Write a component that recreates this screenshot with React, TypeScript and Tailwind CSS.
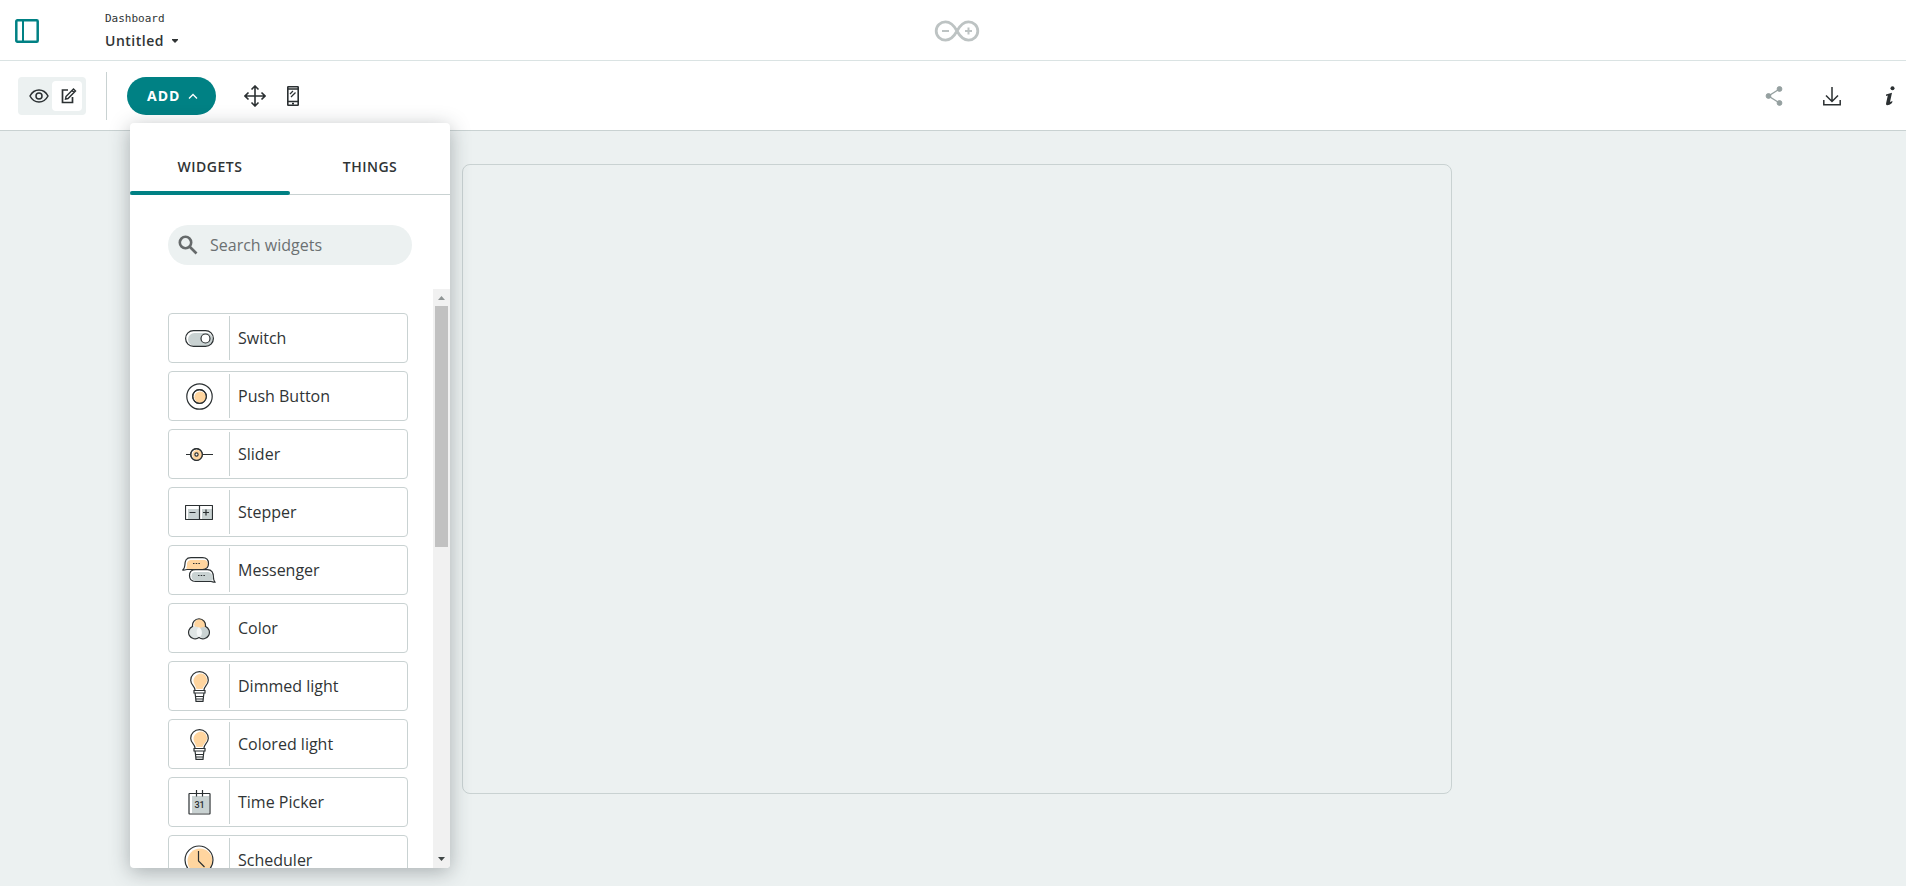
import React, { useState } from 'react';

type IconProps = { children: React.ReactNode; w: number; h: number };

const Icon: React.FC<IconProps> = ({ children, w, h }) => (
  <svg width={w} height={h} viewBox={`0 0 ${w} ${h}`} fill="none" stroke="#2b3032" strokeWidth="1.2" aria-hidden="true">
    {children}
  </svg>
);

const SwitchIcon = () => (
  <Icon w={29} h={17}>
    <rect x="3" y="3" width="25" height="13" rx="6.5" fill="#c9d2d2" stroke="none" />
    <rect x=".6" y=".6" width="27.8" height="15.8" rx="7.9" />
    <circle cx="20.5" cy="8.5" r="4.5" fill="#fff" />
  </Icon>
);

const PushButtonIcon = () => (
  <Icon w={27} h={27}>
    <circle cx="13.5" cy="13.5" r="12.7" />
    <circle cx="13.5" cy="13.5" r="6.8" fill="#fff" />
    <circle cx="14.2" cy="14.2" r="5.8" fill="#ffd59f" stroke="none" />
    <circle cx="13.5" cy="13.5" r="6.8" />
  </Icon>
);

const SliderIcon = () => (
  <Icon w={27} h={13}>
    <path d="M0 6.5h5M16 6.5h11" />
    <circle cx="10.5" cy="6.5" r="5.8" fill="#fff" />
    <circle cx="11.2" cy="7" r="4.9" fill="#ffd59f" stroke="none" />
    <circle cx="10.5" cy="6.5" r="5.8" />
    <circle cx="10.5" cy="6.5" r="1.6" fill="#fff" />
  </Icon>
);

const StepperIcon = () => (
  <Icon w={28} h={15}>
    <path d="M3 4h11v10H3zM17 4h10v10H17z" fill="#c9d2d2" stroke="none" />
    <rect x=".5" y=".5" width="27" height="14" rx=".5" />
    <path d="M14.500 .5v14M4.500 7.500h6M18 7.500h6M21 4.500v6" />
  </Icon>
);

const MessengerIcon = () => (
  <Icon w={34} h={26}>
    <path d="M9 3h14q3 1 3 5-1 4-5 4H6c-2 0-2-1-1-3V6q1-3 4-3z" fill="#ffd59f" stroke="none" />
    <path d="M.8 13c1.500-1.500 1.900-2.500 2-4.500C3 3.500 4 .7 9 .7h11.500q6 0 6 5.900t-6 5.900H5c-1 0-2.500 1-4.200.5z" />
    <path d="M33 25.200c-1.300-1.500-1.500-2.500-1.500-4.500 0-5.500-1.500-8-6-8H13.500q-6 0-6 5.900t6 5.900H29c1.500 0 2.500 1.100 4 .7z" fill="#fff" />
    <path d="M12 15h14.500q4 1 4.500 6 0 3-3 3H13q-3.500-1-3.500-5 0-3 2.500-4z" fill="#c9d2d2" stroke="none" />
    <path d="M11 6.500h1.500m1.200 0h1.500m1.200 0h1.500M16 18.500h1.500m1.200 0h1.500m1.200 0h1.500" />
  </Icon>
);

const ColorIcon = () => (
  <Icon w={24} h={24}>
    <circle cx="13" cy="8.500" r="5.800" fill="#ffd59f" stroke="none" />
    <circle cx="8.300" cy="16.500" r="6" fill="#dfe5e5" stroke="none" />
    <circle cx="16.500" cy="16.500" r="5.500" fill="#c9d2d2" stroke="none" />
    <path d="M12 11q4 3 2.500 8-1.500 2.500-2.500 2.500T9.800 18Q9 13 12 11z" fill="#f4f7f7" stroke="none" />
    <path d="M5.600 10.400a6.500 6.500 0 1 1 12.800 0a6.500 6.500 0 1 1-6.400 11.200a6.500 6.500 0 1 1-6.400-11.200z" />
  </Icon>
);

const BulbIcon = () => (
  <Icon w={19} h={31}>
    <path d="M11 2.500c4 .5 6 3.500 6 7 0 3.500-4 5.500-4.500 8.500H6.500C6 15 3.500 13 3.500 10c0-4 3.500-7 7.500-7.500z" fill="#ffd59f" stroke="none" />
    <path d="M5 19c0-4-4.300-5-4.300-9.800a8.800 8.600 0 0 1 17.600 0C18.300 14 14 15 14 19" />
    <path d="M4 19.500h11v2.500H4zM5 22l.5 3.500h8L14 22M5.500 25.500l.5 4.900h7l.5-4.900M6 28h7" />
  </Icon>
);

const TimePickerIcon = () => (
  <Icon w={23} h={25}>
    <path d="M4 6h17v17H4z" fill="#c9d2d2" stroke="none" />
    <rect x="1" y="3.500" width="21" height="20.500" rx=".5" />
    <path d="M8.500 0v6.500M14.500 0v6.500" />
    <text x="11.500" y="18" textAnchor="middle" fill="#2b3032" stroke="none" className="font-['Roboto'] text-[9px] font-medium">31</text>
  </Icon>
);

const SchedulerIcon = () => (
  <Icon w={30} h={30}>
    <circle cx="16" cy="16" r="12.500" fill="#ffd59f" stroke="none" />
    <circle cx="15" cy="15" r="14" />
    <path d="M14.500 6v10l6 6" />
  </Icon>
);

const WIDGETS = [
  { name: 'Switch', icon: <SwitchIcon /> },
  { name: 'Push Button', icon: <PushButtonIcon /> },
  { name: 'Slider', icon: <SliderIcon /> },
  { name: 'Stepper', icon: <StepperIcon /> },
  { name: 'Messenger', icon: <MessengerIcon /> },
  { name: 'Color', icon: <ColorIcon /> },
  { name: 'Dimmed light', icon: <BulbIcon /> },
  { name: 'Colored light', icon: <BulbIcon /> },
  { name: 'Time Picker', icon: <TimePickerIcon /> },
  { name: 'Scheduler', icon: <SchedulerIcon /> },
];

const Header = () => (
  <header className="grid h-[61px] shrink-0 grid-cols-[1fr_auto_1fr] items-center border-b border-[#dae3e3] bg-white pt-px pl-2">
    <div className="flex items-center gap-[66px] pl-[7px]">
      <button aria-label="Toggle sidebar">
        <svg width="24" height="24" viewBox="0 0 24 24" fill="none" stroke="#008184" strokeWidth="2.5">
          <rect x="1.300" y="1.300" width="21.400" height="21.400" rx="1" />
          <path d="M8 1v22" strokeWidth="2" />
        </svg>
      </button>
      <div className="flex flex-col">
        <span className="font-['DejaVu_Sans_Mono',monospace] text-[11px] leading-4">Dashboard</span>
        <button className="mt-1 flex items-center gap-2 text-sm leading-5 font-semibold tracking-[0.5px]">
          Untitled
          <svg width="6" height="4" viewBox="0 0 6 4" fill="currentColor" aria-hidden="true">
            <path d="M0 0h6v1L3 4 0 1z" />
          </svg>
        </button>
      </div>
    </div>
    <svg width="46" height="22" viewBox="0 0 46 22" fill="none" stroke="#bdc3c3" strokeWidth="2.800" role="img" aria-label="Arduino">
      <path d="M23 11C20 5.500 16.500 1.900 11.500 1.900a9.300 9.100 0 0 0 0 18.200C16.500 20.100 20 16.500 23 11s6.500-9.100 11.500-9.100a9.300 9.100 0 0 1 0 18.200C29.500 20.100 26 16.500 23 11z" />
      <path d="M8 11h7M31 11h7M34.500 7.500v7" strokeWidth="2" />
    </svg>
  </header>
);

const Toolbar = () => (
  <div className="flex h-[70px] shrink-0 items-center justify-between border-b border-[#c9d2d2] bg-white pr-[10px] pl-[18px]">
    <div className="flex items-center">
      <div className="flex h-[38px] items-center rounded-sm bg-[#ecf1f1] px-1">
        <button aria-label="Preview" className="flex size-[30px] items-center justify-center pl-1">
          <svg width="20" height="14" viewBox="0 0 20 14" fill="none" stroke="#2b3032" strokeWidth="1.500">
            <path d="M1 7c2-3.800 5.300-6 9-6s7 2.200 9 6c-2 3.800-5.300 6-9 6S3 10.800 1 7z" />
            <circle cx="10" cy="7" r="3" />
          </svg>
        </button>
        <button aria-label="Edit" aria-pressed="true" className="flex size-[30px] items-center justify-center rounded-sm bg-white pl-1">
          <svg width="16" height="16" viewBox="0 0 16 16" fill="none" stroke="#2b3032" strokeWidth="1.700">
            <path d="M7 2H1.500v12.500h10V9" />
            <path d="M5 8.500 12.500 1l2 2L7 10.500l-2.500.5zM11 2.500l2 2" strokeWidth="1.400" />
          </svg>
        </button>
      </div>
      <div className="ml-5 h-12 w-px bg-[#c9d2d2]" />
      <button className="ml-5 flex h-[38px] items-center gap-2 rounded-full bg-[#008184] pr-[18px] pl-5 text-sm font-bold tracking-[1px] text-white">
        ADD
        <svg width="10" height="6" viewBox="0 0 10 6" fill="none" stroke="currentColor" strokeWidth="1.300" aria-hidden="true">
          <path d="M1 5.500 5 1.500l4 4" />
        </svg>
      </button>
      <button aria-label="Move" className="ml-7">
        <svg width="22" height="22" viewBox="0 0 22 22" fill="none" stroke="#2b3032" strokeWidth="1.600">
          <path d="M11 1.500v19M1.500 11h19M7.500 4.500 11 1l3.500 3.500M7.500 17.500 11 21l3.500-3.500M4.500 7.500 1 11l3.500 3.500M17.500 7.500 21 11l-3.500 3.500" />
        </svg>
      </button>
      <button aria-label="Mobile layout" className="ml-[21px]">
        <svg width="12" height="20" viewBox="0 0 12 20" fill="none" stroke="#2b3032" strokeWidth="1.600">
          <rect x=".8" y=".8" width="10.400" height="18.400" rx=".5" />
          <path d="M1 3h10M1 15.500h10M3 8l3-3M4 11l4.500-4.500" strokeWidth="1.300" />
          <path d="M5 17.600h2" strokeWidth="1.600" />
        </svg>
      </button>
    </div>
    <div className="flex items-center">
      <button aria-label="Share">
        <svg width="18" height="20" viewBox="0 0 18 20" fill="#95a0a0" stroke="#95a0a0">
          <path d="M14.500 3 3.500 10l11 7" fill="none" strokeWidth="1.400" />
          <circle cx="14.500" cy="3" r="2.400" />
          <circle cx="3.500" cy="10" r="2.400" />
          <circle cx="14.500" cy="17" r="2.400" />
        </svg>
      </button>
      <button aria-label="Download" className="ml-10">
        <svg width="18" height="20" viewBox="0 0 18 20" fill="none" stroke="#2b3032" strokeWidth="1.500">
          <path d="M9 1v14M3 9.500l6 6 6-6M.8 14v4.700h16.400V14" />
        </svg>
      </button>
      <button aria-label="Information" className="ml-[43px]">
        <svg width="12" height="20" viewBox="0 0 12 20" fill="#2b3032">
          <circle cx="8.500" cy="2.300" r="2" />
          <path d="M2 8.500 8 6.800 6 16l2.500-1-.5 2c-2 1.500-3.500 2.300-5 2.200-1.300-.3-1-1.700-.7-3L3.800 9.500 2 10z" />
        </svg>
      </button>
    </div>
  </div>
);

const AddPanel = () => {
  const [tab, setTab] = useState('WIDGETS');

  return (
    <aside className="absolute top-[123px] bottom-[18px] left-[130px] z-10 flex w-80 flex-col overflow-hidden rounded-sm bg-white shadow-[0_4px_20px_rgba(44,53,58,0.35)]">
      <div role="tablist" className="flex h-[72px] shrink-0 border-b border-[#c9d2d2]">
        {['WIDGETS', 'THINGS'].map((name) => (
          <button
            key={name}
            role="tab"
            aria-selected={tab === name}
            onClick={() => setTab(name)}
            className="relative flex flex-1 items-center justify-center pt-4 text-sm font-semibold tracking-[0.5px]"
          >
            {name}
            {tab === name && <span className="absolute inset-x-0 -bottom-px h-1 rounded-sm bg-[#008184]" />}
          </button>
        ))}
      </div>
      <label className="mx-[38px] mt-[30px] flex h-10 w-[244px] shrink-0 items-center gap-3 rounded-full bg-[#ecf1f1] pl-[10px]">
        <svg width="20" height="20" viewBox="0 0 20 20" fill="none" stroke="#666a6b" strokeWidth="2.600" aria-hidden="true">
          <circle cx="7.500" cy="7.500" r="5.700" />
          <path d="m12 12 6.500 6.500" />
        </svg>
        <input
          type="text"
          aria-label="Search widgets"
          placeholder="Search widgets"
          className="w-44 bg-transparent text-base outline-none placeholder:text-[#6b7071]"
        />
      </label>
      <div className="mt-6 flex min-h-0 flex-1">
        <ul className="flex flex-1 flex-col gap-2 overflow-hidden pt-6 pr-[25px] pl-[38px]">
          {WIDGETS.map((widget) => (
            <li key={widget.name} className="shrink-0">
              <button className="flex h-[50px] w-full items-center rounded-sm border border-[#c9d2d2] bg-white text-left">
                <span className="flex h-11 w-[61px] items-center justify-center border-r border-[#c9d2d2]">{widget.icon}</span>
                <span className="pl-2 text-base">{widget.name}</span>
              </button>
            </li>
          ))}
        </ul>
        <div className="flex w-[17px] flex-col items-center bg-[#f1f1f1]" aria-hidden="true">
          <svg width="17" height="17" viewBox="0 0 17 17" fill="#8f9494">
            <path d="m5 11 3.500-4 3.500 4z" />
          </svg>
          <div className="h-[241px] w-[13px] bg-[#c1c1c1]" />
          <svg className="mt-auto" width="17" height="17" viewBox="0 0 17 17" fill="#404646">
            <path d="m5 6 3.500 4L12 6z" />
          </svg>
        </div>
      </div>
    </aside>
  );
};

export default function App() {
  return (
    <div className="relative flex h-screen flex-col overflow-hidden bg-[#ecf1f1] font-['Open_Sans',sans-serif] text-[#303435]">
      <Header />
      <Toolbar />
      <AddPanel />
      <main className="flex justify-center pt-[33px] pl-2">
        <div className="h-[630px] w-full max-w-[990px] rounded-lg border border-[#c9d2d2]" />
      </main>
    </div>
  );
}
